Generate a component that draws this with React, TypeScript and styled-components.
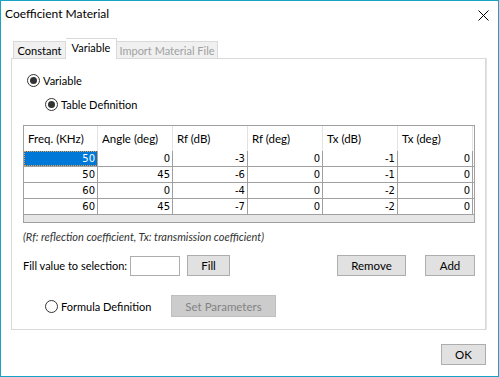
import React from "react";
import styled, { createGlobalStyle } from "styled-components";

const Global = createGlobalStyle`
  html, body { margin: 0; padding: 0; background: #fff; }
  body { font-family: Lato, "Noto Sans", sans-serif; font-size: 11px; color: #000; }
  * { box-sizing: border-box; }
`;

const Window = styled.div`
  width: 499px;
  height: 377px;
  border: 1px solid #18a3c6;
  background: #fff;
  display: flex;
  flex-direction: column;
`;

const TitleBar = styled.div`
  height: 25px;
  padding: 0 9px 0 4px;
  display: flex;
  align-items: center;
  justify-content: space-between;
`;

const Title = styled.div`
  font-size: 12px;
  color: #000;
`;

const CloseBtn = styled.svg`
  width: 11px;
  height: 11px;
  margin-top: 3px;
`;

const Body = styled.div`
  flex: 1;
  display: flex;
  flex-direction: column;
  padding: 12px 12px 0 10px;
`;

const TabStrip = styled.div`
  height: 20px;
  display: flex;
  align-items: flex-end;
  padding-left: 2px;
`;

const Tab = styled.div<{ $active?: boolean; $disabled?: boolean; $w: number }>`
  position: relative;
  width: ${(p) => p.$w}px;
  height: ${(p) => (p.$active ? 21 : 17)}px;
  margin-bottom: ${(p) => (p.$active ? -1 : 0)}px;
  z-index: ${(p) => (p.$active ? 1 : 0)};
  background: ${(p) => (p.$active ? "#fff" : "#f0f0f0")};
  border: 1px solid #d9d9d9;
  border-bottom: none;
  color: ${(p) => (p.$disabled ? "#a0a0a0" : "#000")};
  white-space: nowrap;
  display: flex;
  align-items: center;
  justify-content: center;
  padding-bottom: ${(p) => (p.$active ? 3 : 0)}px;
  & + & { border-left: none; }
`;

const Panel = styled.div`
  height: 272px;
  border: 1px solid #d9d9d9;
  box-shadow: 1px 0 0 #e3e3e3;
  display: flex;
  flex-direction: column;
  padding: 0 10px 0 11px;
`;

const RadioRow = styled.label<{ $indent: number; $mt: number }>`
  display: flex;
  align-items: center;
  height: 13px;
  margin-left: ${(p) => p.$indent}px;
  margin-top: ${(p) => p.$mt}px;
  gap: 3px;
  white-space: nowrap;
`;

const RadioCircle = styled.span<{ $checked?: boolean }>`
  width: 13px;
  height: 13px;
  border-radius: 50%;
  border: 1px solid #333;
  background: #fff;
  display: flex;
  align-items: center;
  justify-content: center;
  flex: none;
  &::after {
    content: "";
    width: 7px;
    height: 7px;
    border-radius: 50%;
    background: ${(p) => (p.$checked ? "#333" : "transparent")};
  }
`;

const Grid = styled.div`
  margin-top: 14px;
  width: 452px;
  border: 1px solid #a0a0a0;
  display: flex;
  flex-direction: column;
`;

const HeaderRow = styled.div`
  display: flex;
  height: 25px;
  background: #fff;
`;

const HeaderCell = styled.div<{ $w: number }>`
  width: ${(p) => p.$w}px;
  border-right: 1px solid #e3e3e3;
  padding-left: 4px;
  display: flex;
  align-items: center;
  font-size: 11.5px;
`;

const DataRow = styled.div`
  display: flex;
  height: 16px;
  border-bottom: 1px solid #a0a0a0;
`;

const DataCell = styled.div<{ $w: number; $sel?: boolean }>`
  width: ${(p) => p.$w}px;
  border-right: 1px solid #a0a0a0;
  font-family: "DejaVu Sans", sans-serif;
  font-size: 10px;
  text-align: right;
  padding-right: 2px;
  line-height: 15px;
  background: ${(p) => (p.$sel ? "#0078d7" : "#fff")};
  color: ${(p) => (p.$sel ? "#fff" : "#000")};
  outline: ${(p) => (p.$sel ? "1px dotted #f0a040" : "none")};
  outline-offset: -1px;
`;

const GridFooter = styled.div`
  height: 7px;
  background: #e6e6e6;
`;

const Note = styled.div`
  margin-top: 7px;
  height: 14px;
  line-height: 14px;
  font-style: italic;
  color: #333;
  font-size: 11px;
`;

const FillRow = styled.div`
  margin-top: 11px;
  display: flex;
  align-items: center;
  height: 21px;
  width: 452px;
  white-space: nowrap;
`;

const FillLabel = styled.span`
  width: 107px;
`;

const Input = styled.div`
  width: 50px;
  height: 20px;
  border: 1px solid #adadad;
  background: #fff;
`;

const Button = styled.div<{ $w: number; $h?: number; $disabled?: boolean; $ml?: number }>`
  width: ${(p) => p.$w}px;
  height: ${(p) => p.$h ?? 21}px;
  margin-left: ${(p) => p.$ml ?? 0}px;
  background: ${(p) => (p.$disabled ? "#cccccc" : "#e1e1e1")};
  border: 1px solid ${(p) => (p.$disabled ? "#bfbfbf" : "#adadad")};
  color: ${(p) => (p.$disabled ? "#838383" : "#000")};
  display: flex;
  align-items: center;
  justify-content: center;
  flex: none;
  font-size: 11.5px;
`;

const Spacer = styled.div`
  flex: 1;
`;

const FormulaRow = styled.div`
  margin-top: 19px;
  display: flex;
  align-items: center;
  height: 22px;
  padding-left: 22px;
`;

const FormulaLabel = styled.label`
  display: flex;
  align-items: center;
  gap: 3px;
  width: 126px;
  white-space: nowrap;
`;

const Footer = styled.div`
  margin-top: 14px;
  display: flex;
  justify-content: flex-end;
`;

const cols = [
  { name: "Freq. (KHz)", w: 74 },
  { name: "Angle (deg)", w: 75 },
  { name: "Rf (dB)", w: 75 },
  { name: "Rf (deg)", w: 75 },
  { name: "Tx (dB)", w: 75 },
  { name: "Tx (deg)", w: 75 },
];

const rows = [
  [50, 0, -3, 0, -1, 0],
  [50, 45, -6, 0, -1, 0],
  [60, 0, -4, 0, -2, 0],
  [60, 45, -7, 0, -2, 0],
];

export default function App() {
  return (
    <>
      <Global />
      <Window>
        <TitleBar>
          <Title>Coefficient Material</Title>
          <CloseBtn viewBox="0 0 11 11">
            <path d="M0.5 0.5 L10.5 10.5 M10.5 0.5 L0.5 10.5" stroke="#000" strokeWidth="1" />
          </CloseBtn>
        </TitleBar>
        <Body>
          <TabStrip>
            <Tab $w={53}>Constant</Tab>
            <Tab $w={51} $active>Variable</Tab>
            <Tab $w={101} $disabled>Import Material File</Tab>
          </TabStrip>
          <Panel>
            <RadioRow $indent={4} $mt={15}>
              <RadioCircle $checked />
              Variable
            </RadioRow>
            <RadioRow $indent={22} $mt={11}>
              <RadioCircle $checked />
              Table Definition
            </RadioRow>
            <Grid>
              <HeaderRow>
                {cols.map((c) => (
                  <HeaderCell key={c.name} $w={c.w}>{c.name}</HeaderCell>
                ))}
              </HeaderRow>
              {rows.map((r, i) => (
                <DataRow key={i}>
                  {r.map((v, j) => (
                    <DataCell key={j} $w={cols[j].w} $sel={i === 0 && j === 0}>{v}</DataCell>
                  ))}
                </DataRow>
              ))}
              <GridFooter />
            </Grid>
            <Note>(Rf: reflection coefficient, Tx: transmission coefficient)</Note>
            <FillRow>
              <FillLabel>Fill value to selection:</FillLabel>
              <Input />
              <Button $w={43} $ml={7}>Fill</Button>
              <Spacer />
              <Button $w={69}>Remove</Button>
              <Button $w={50} $ml={19}>Add</Button>
            </FillRow>
            <FormulaRow>
              <FormulaLabel>
                <RadioCircle />
                Formula Definition
              </FormulaLabel>
              <Button $w={105} $h={22} $disabled>Set Parameters</Button>
            </FormulaRow>
          </Panel>
          <Footer>
            <Button $w={45}>OK</Button>
          </Footer>
        </Body>
      </Window>
    </>
  );
}
